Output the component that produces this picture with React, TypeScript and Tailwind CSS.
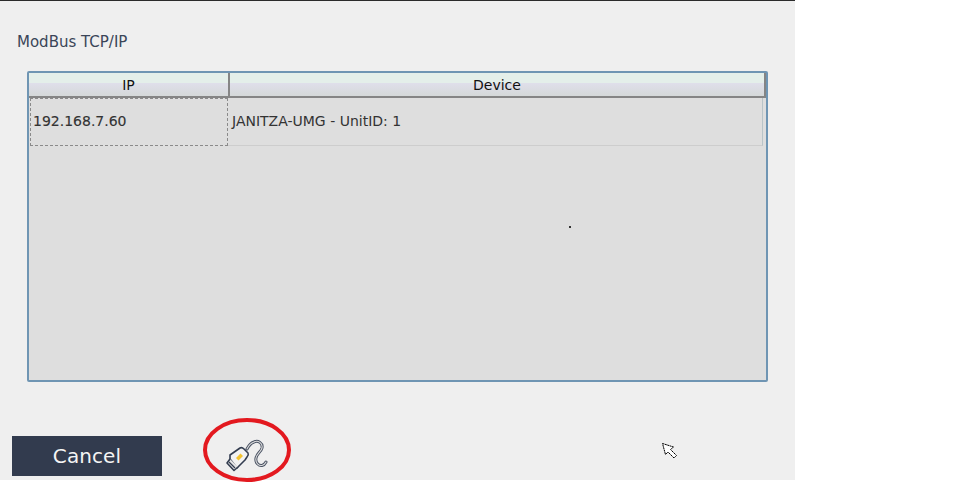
import React from 'react';

const dejavu = "font-['DejaVu_Sans',sans-serif]";
const headCell = 'bg-[linear-gradient(to_bottom,#e4efea_0%,#e4efea_45%,#dfdfea_45%,#d5d9d9_100%)] text-center';

function PlugIcon() {
  const cable = 'M45 32 C47 28 49 26 52 25 C56 23 61 26 60 31 C59 35 55 36 54 41 C53 46 57 49 60 48.5 C62 48 63 47 64 45';
  return (
    <svg width="90" height="66" viewBox="0 0 90 66" fill="none">
      <ellipse cx="45" cy="33" rx="42" ry="30" stroke="#e3191f" strokeWidth="4" />
      <path d={cable} stroke="#4a5364" strokeWidth="3" strokeLinecap="round" />
      <path d={cable} stroke="#dcdcdc" strokeWidth="1.1" strokeLinecap="round" />
      <g stroke="#333d50" strokeWidth="1.6" strokeLinejoin="round">
        <path d="M28 38 L38 31 Q40 30 42 32 L46 36 Q47 38 45 40 L43 43 L35 51 L28 42 Z" fill="#f2f2f2" />
        <path d="M28 42 L25 46 L32 53.5 L36 50" fill="#e4e4e4" />
        <path d="M27 45 L33 51" strokeWidth="1.2" />
      </g>
      <path d="M34 41 L38.5 36.5 L41 39 L36.5 43.5 Z" fill="#f2c230" />
    </svg>
  );
}

function Cursor() {
  return (
    <svg width="17" height="17" viewBox="0 0 17 17" fill="#ffffff" stroke="#000000" strokeWidth="1">
      <path d="M1.5 1.5 L12.5 5 L9.5 7.5 L15.5 13.5 L13 16 L7 10 L4.5 12.5 Z" strokeDasharray="2 0.5" />
    </svg>
  );
}

export default function App() {
  return (
    <div className={`relative h-[483px] w-[979px] overflow-hidden bg-white ${dejavu}`}>
      <div className="flex h-[480px] w-[795px] flex-col border-t border-t-[#2b2b2b] bg-[#efefef]">
        <div className="ml-[17px] mt-[32px] h-[18px] shrink-0 text-[15px] leading-[18px] text-[#3a4558]">ModBus TCP/IP</div>

        <div className="ml-[27px] mt-[20px] flex h-[311px] w-[741px] shrink-0 flex-col rounded-[2px] border-2 border-[#6f95b3] bg-[#dedede]">
          <div className="flex h-[25px] border-b-2 border-b-[#858585] text-[14px] leading-[24px] text-[#111111]">
            <div className={`w-[201px] border-r-2 border-r-[#858585] ${headCell}`}>IP</div>
            <div className={`flex-1 border-r-2 border-r-[#858585] ${headCell}`}>Device</div>
          </div>
          <div className="flex h-[49px] pl-[1px] text-[14px] leading-[46px] text-[#333333]">
            <div className="h-[48px] w-[198px] border border-dashed border-[#8a8a8a] pl-[2px] leading-[44px] [-webkit-text-stroke:0.15px_#333333]">
              192.168.7.60
            </div>
            <div className="h-[48px] w-[535px] border-r border-b border-r-[#b9c4c8] border-b-[#cdcdcd] pl-[4px]">
              JANITZA-UMG - UnitID: 1
            </div>
          </div>
        </div>

        <div className="ml-[12px] mt-[54px] flex h-[40px] shrink-0 items-start">
          <button className="h-[40px] w-[150px] bg-[#323b4e] text-[20px] leading-[40px] tracking-[0.1px] text-[#f4f4f4]">
            Cancel
          </button>
          <div className="-mt-[19px] ml-[40px]">
            <PlugIcon />
          </div>
        </div>
      </div>

      <div className="absolute left-[569px] top-[226px] h-[2px] w-[2px] bg-[#333333]" />
      <div className="absolute left-[661px] top-[442px]">
        <Cursor />
      </div>
    </div>
  );
}
